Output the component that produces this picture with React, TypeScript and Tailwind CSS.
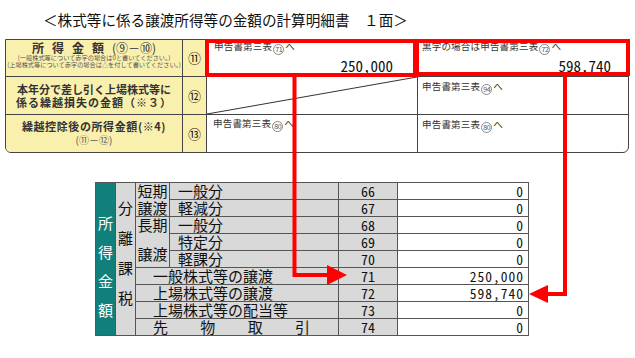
import type { ReactNode } from 'react';

const jp = "font-['Noto_Sans_CJK_JP',sans-serif]";
const mono = "font-['Noto_Sans_Mono_CJK_JP','Liberation_Mono',monospace]";

function Circ({ n }: { n: string }) {
  return (
    <span className="inline-flex items-center justify-center w-[11px] h-[11px] rounded-full border border-[#888] text-[7px] leading-none tracking-[-0.4px] mx-[1px] align-[-2px] text-[#555]">
      {n}
    </span>
  );
}

function Note({ children }: { children: ReactNode }) {
  return <div className="text-[9.5px] leading-[11px] tracking-[0.2px] text-[#333] whitespace-nowrap">{children}</div>;
}

const rows = [
  { r: 'row-start-1', no: '66', val: '0' },
  { r: 'row-start-2', no: '67', val: '0' },
  { r: 'row-start-3', no: '68', val: '0' },
  { r: 'row-start-4', no: '69', val: '0' },
  { r: 'row-start-5', no: '70', val: '0' },
  { r: 'row-start-6', no: '71', val: '250,000' },
  { r: 'row-start-7', no: '72', val: '598,740' },
  { r: 'row-start-8', no: '73', val: '0' },
  { r: 'row-start-9', no: '74', val: '0' },
];

const items = [
  { r: 'row-start-1', t: '一般分' },
  { r: 'row-start-2', t: '軽減分' },
  { r: 'row-start-3', t: '一般分' },
  { r: 'row-start-4', t: '特定分' },
  { r: 'row-start-5', t: '軽課分' },
];

const wide = [
  { r: 'row-start-6', t: '一般株式等の譲渡' },
  { r: 'row-start-7', t: '上場株式等の譲渡' },
  { r: 'row-start-8', t: '上場株式等の配当等' },
];

export default function App() {
  const gray = 'bg-[#d9d9d9]';
  return (
    <div className={`relative w-[635px] h-[358px] bg-white overflow-hidden text-[#111] ${jp}`}>
      {/* 見出し */}
      <div className="pl-[43px] pt-[11px] text-[14.6px] leading-[18px] whitespace-nowrap">＜株式等に係る譲渡所得等の金額の計算明細書　１面＞</div>

      {/* 上の表 */}
      <div className="ml-[5px] mt-[10px] w-[624px] grid grid-cols-[177px_24px_211px_1fr] grid-rows-[37px_38px_37px] border border-[#444] rounded-b-[6px] overflow-hidden">
        <div className="bg-[#faf0ae] border-r border-b border-[#444] flex flex-col items-center pt-[1px]">
          <div className="text-[12px] leading-[14px] font-bold text-[#333] whitespace-nowrap">
            <span className="tracking-[8px]">所得金額</span>
            <span className="font-normal">(⑨－⑩)</span>
          </div>
          <div className="text-[6.2px] leading-[6.5px] text-[#555] whitespace-nowrap">(一般株式等について赤字の場合は0と書いてください。)</div>
          <div className="text-[6.2px] leading-[6.5px] text-[#555] whitespace-nowrap">(上場株式等について赤字の場合は△を付して書いてください。)</div>
        </div>
        <div className="bg-[#faf0ae] border-r border-b border-[#444] flex items-center justify-center text-[13px]">⑪</div>
        <div className="border-r border-b border-[#444] pl-[7px] pt-[1px]">
          <Note>申告書第三表<Circ n="71" />へ</Note>
          <div className={`mt-[2px] pr-[24px] text-right text-[15px] leading-[18px] ${mono}`}>250,000</div>
        </div>
        <div className="border-b border-[#444] pl-[4px] pt-[1px]">
          <Note>黒字の場合は申告書第三表<Circ n="72" />へ</Note>
          <div className={`mt-[2px] pr-[17px] text-right text-[15px] leading-[18px] ${mono}`}>598,740</div>
        </div>

        <div className="bg-[#faf0ae] border-r border-b border-[#444] flex flex-col items-center justify-center font-bold text-[11px] leading-[13px] text-[#333] whitespace-nowrap">
          <div>本年分で差し引く上場株式等に</div>
          <div className="tracking-[1px]">係る繰越損失の金額（※３）</div>
        </div>
        <div className="bg-[#faf0ae] border-r border-b border-[#444] flex items-center justify-center text-[13px]">⑫</div>
        <div className="relative border-r border-b border-[#444]">
          <svg className="absolute inset-0 w-full h-full" viewBox="0 0 100 100" preserveAspectRatio="none">
            <line x1="0" y1="100" x2="100" y2="0" stroke="#333" strokeWidth="1" vectorEffect="non-scaling-stroke" />
          </svg>
        </div>
        <div className="border-b border-[#444] pl-[4px] pt-[4px]">
          <Note>申告書第三表<Circ n="94" />へ</Note>
        </div>

        <div className="bg-[#faf0ae] border-r border-[#444] flex flex-col items-center justify-center text-[#333] whitespace-nowrap">
          <div className="font-bold text-[11px] leading-[13px] tracking-[0.6px]">繰越控除後の所得金額(※4)</div>
          <div className="text-[10px] leading-[14px] text-[#555]">(⑪－⑫)</div>
        </div>
        <div className="bg-[#faf0ae] border-r border-[#444] flex items-center justify-center text-[13px]">⑬</div>
        <div className="border-r border-[#444] pl-[6px] pt-[3px]">
          <Note>申告書第三表<Circ n="80" />へ</Note>
        </div>
        <div className="pl-[4px] pt-[4px]">
          <Note>申告書第三表<Circ n="80" />へ</Note>
        </div>
      </div>

      {/* 下の表 */}
      <div className="ml-[95px] mt-[29px] w-max grid grid-cols-[19px_19px_33px_168px_58px_130px] grid-rows-[repeat(9,16px)] gap-px p-px bg-[#555] text-[15px] leading-[16px]">
        <div className="col-start-1 row-start-1 row-span-9 bg-[#11807a] text-white flex flex-col items-center pt-[32px] gap-[14px] leading-[15px]">
          <span>所</span>
          <span>得</span>
          <span>金</span>
          <span>額</span>
        </div>
        <div className={`col-start-2 row-start-1 row-span-9 ${gray} flex flex-col items-center pt-[17px] gap-[15px] leading-[15px]`}>
          <span>分</span>
          <span>離</span>
          <span>課</span>
          <span>税</span>
        </div>
        <div className={`col-start-3 row-start-1 row-span-2 ${gray} flex flex-col justify-between items-center`}>
          <span>短期</span>
          <span>譲渡</span>
        </div>
        <div className={`col-start-3 row-start-3 row-span-3 ${gray} flex flex-col justify-between items-center pb-[5px]`}>
          <span>長期</span>
          <span>譲渡</span>
        </div>
        {items.map((it, i) => (
          <div key={i} className={`col-start-4 ${it.r} ${gray} pl-[8px]`}>{it.t}</div>
        ))}
        {wide.map((it, i) => (
          <div key={i} className={`col-start-3 col-span-2 ${it.r} ${gray} pl-[17px]`}>{it.t}</div>
        ))}
        <div className={`col-start-3 col-span-2 row-start-9 ${gray} pl-[17px] pr-[28px] flex justify-between`}>
          <span>先</span>
          <span>物</span>
          <span>取</span>
          <span>引</span>
        </div>
        {rows.map((row) => (
          <div key={row.no} className={`col-start-5 ${row.r} ${gray} text-center text-[14px] ${mono}`}>{row.no}</div>
        ))}
        {rows.map((row) => (
          <div key={'v' + row.no} className={`col-start-6 ${row.r} bg-white text-right pr-[4px] text-[13.5px] tracking-[1px] ${mono}`}>{row.val}</div>
        ))}
      </div>

      {/* 赤枠と矢印 */}
      <div className="absolute left-[205px] top-[39px] w-[214px] h-[38px] border-4 border-[#ff0000]" />
      <div className="absolute left-[413px] top-[39px] w-[217px] h-[37px] border-4 border-[#ff0000]" />
      <svg className="absolute inset-0 pointer-events-none" width="635" height="358" viewBox="0 0 635 358">
        <path d="M294.5 76 V275 H330" fill="none" stroke="#ff0000" strokeWidth="4" />
        <polygon points="327,265 347,275 327,285" fill="#ff0000" />
        <path d="M565 75 V294 H546" fill="none" stroke="#ff0000" strokeWidth="4" />
        <polygon points="548,285 529,294 548,303" fill="#ff0000" />
      </svg>
    </div>
  );
}
